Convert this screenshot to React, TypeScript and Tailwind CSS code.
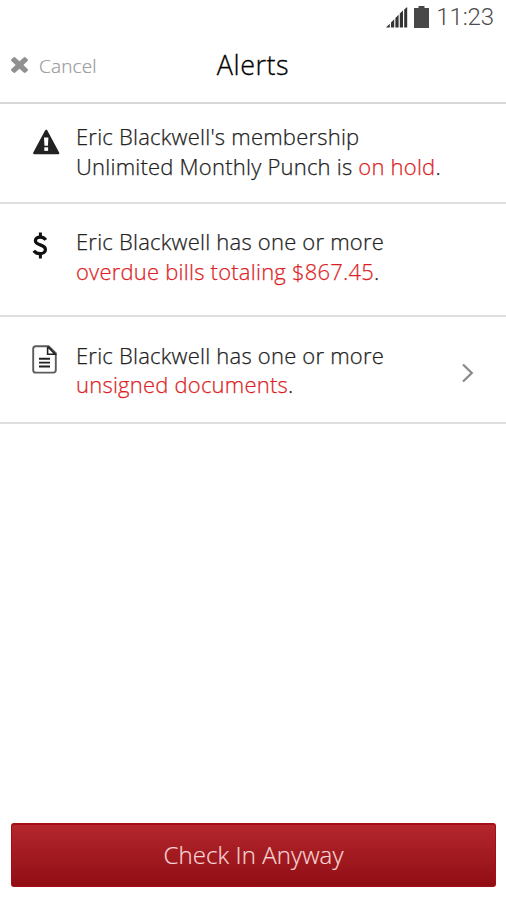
import type { ReactNode } from "react";

function StatusBar() {
  return (
    <div className="flex h-[34px] items-center justify-end pr-[12px]">
      <svg className="mr-[5px] h-[21px] w-[22px]" viewBox="0 0 22 21" fill="#333">
        <path d="M0 20.5L3.8 16.8V20.5ZM5 20.5V15.5L8.2 12.3V20.5ZM9.4 20.5V11L12.6 7.8V20.5ZM13.8 20.5V6.6L17 3.4V20.5ZM18.2 20.5V2.4L21.2 0V20.5Z" />
      </svg>
      <svg className="mr-[7px] h-[22px] w-[16px]" viewBox="0 0 16 22" fill="#484848">
        <path d="M5.5 0h6v2h4.5v20H1V2h4.5Z" />
      </svg>
      <span className="font-['Roboto',sans-serif] text-[24px] leading-[34px] font-light tracking-[-0.1px] text-[#4c4c4c]">11:23</span>
    </div>
  );
}

function TimesIcon() {
  return (
    <svg className="h-[16px] w-[17px]" viewBox="110 366 1188 1188" preserveAspectRatio="none" fill="#909090">
      <path d="M1298 1322q0 40-28 68l-136 136q-28 28-68 28t-68-28l-294-294-294 294q-28 28-68 28t-68-28l-136-136q-28-28-28-68t28-68l294-294-294-294q-28-28-28-68t28-68l136-136q28-28 68-28t68 28l294 294 294-294q28-28 68-28t68 28l136 136q28 28 28 68t-28 68l-294 294 294 294q28 28 28 68z" />
    </svg>
  );
}

function WarningIcon() {
  return (
    <svg className="h-[26px] w-[28px]" viewBox="0 0 28 26">
      <path d="M14.2 2L26 24H2.4Z" fill="#222" stroke="#222" strokeWidth="2.6" strokeLinejoin="round" />
      <path d="M12 8.6h4.4l-.5 8.2h-3.4Z" fill="#fff" />
      <path d="M12.3 18.3h3.8v3.6h-3.8Z" fill="#fff" />
    </svg>
  );
}

function DollarIcon() {
  return (
    <svg className="h-[27px] w-[16px]" viewBox="0 0 16 27" fill="none" stroke="#111" strokeWidth="3.3">
      <path d="M13.8 7.9C12.6 6.2 10.5 5.1 8.2 5.1C5.3 5.1 3.4 6.6 3.4 8.8C3.4 14 13.4 11.7 13.4 17.4C13.4 20.1 11.1 21.7 8.1 21.7C5.4 21.7 3.3 20.7 1.8 18.7" />
      <path d="M8.4 .5V5M8.4 22V26.6" strokeWidth="3" />
    </svg>
  );
}

function DocumentIcon() {
  return (
    <svg className="h-[29px] w-[25px]" viewBox="0 0 25 29" fill="none" stroke="#5c5c5c" strokeWidth="1.9">
      <path d="M3.7 1.2H16.6L23.8 8.1V25.1Q23.8 27.6 21.3 27.6H3.7Q1.2 27.6 1.2 25.1V3.7Q1.2 1.2 3.7 1.2Z" />
      <path d="M15.6 1.8V9.2H23.1L16 1.9" stroke="#222" strokeWidth="1.6" />
      <path d="M7 13.7H18M7 17.6H18M7 21.5H18" stroke="#222" />
    </svg>
  );
}

function Alert({ icon, className, children }: { icon: ReactNode; className: string; children: ReactNode }) {
  return (
    <li className={`flex border-b-2 border-[#dedede] ${className}`}>
      <div className="w-[44px] shrink-0">{icon}</div>
      <p className="grow whitespace-nowrap text-[22px] font-light tracking-[0.22px] [-webkit-text-stroke:0.25px]">{children}</p>
    </li>
  );
}

export default function App() {
  return (
    <main className="flex h-[900px] w-[506px] flex-col bg-white font-['Open_Sans',sans-serif] text-[#222]">
      <StatusBar />
      <header className="grid h-[70px] grid-cols-[1fr_auto_1fr] items-center border-b-2 border-[#d8d8d8] pb-[6px]">
        <button className="flex items-center gap-[11px] pl-[11px] text-[19px] font-light tracking-[0.15px] text-[#999] [-webkit-text-stroke:0.2px]">
          <TimesIcon />
          <span className="pt-[2px]">Cancel</span>
        </button>
        <h1 className="text-[27px] leading-[36px] font-light tracking-[0.5px] text-black [-webkit-text-stroke:0.3px]">Alerts</h1>
      </header>
      <ul>
        <Alert className="h-[100px] pl-8 pt-[17px] leading-[30px]" icon={<div className="pt-[8px]"><WarningIcon /></div>}>
          Eric Blackwell's membership<br />
          Unlimited Monthly Punch is <span className="text-[#dc1f26]">on hold</span>.
        </Alert>
        <Alert className="h-[113px] pl-8 pt-[23px] leading-[29.5px]" icon={<div className="pt-[5px]"><DollarIcon /></div>}>
          Eric Blackwell has one or more<br />
          <span className="text-[#dc1f26]">overdue bills totaling $867.45</span>.
        </Alert>
        <Alert className="h-[107px] pl-8 pt-[24px] leading-[29px]" icon={<div className="pt-[4px]"><DocumentIcon /></div>}>
          <span className="flex items-center justify-between pr-[32px]">
            <span>
              Eric Blackwell has one or more<br />
              <span className="text-[#dc1f26]">unsigned documents</span>.
            </span>
            <svg className="mt-[6px] h-[20px] w-[13px]" viewBox="0 0 13 20" fill="none" stroke="#888" strokeWidth="2.2">
              <path d="M2 1.5L10.8 10L2 18.5" />
            </svg>
          </span>
        </Alert>
      </ul>
      <button className="mr-[10px] ml-[11px] mt-auto mb-[13px] h-[64px] rounded-[3px] border border-t-2 border-[#a60d15] bg-linear-to-b from-[#b3262c] to-[#910d14] pb-[2px] text-[24px] font-light tracking-[0.1px] text-[#f6d5d5] [-webkit-text-stroke:0.2px]">
        Check In Anyway
      </button>
    </main>
  );
}
